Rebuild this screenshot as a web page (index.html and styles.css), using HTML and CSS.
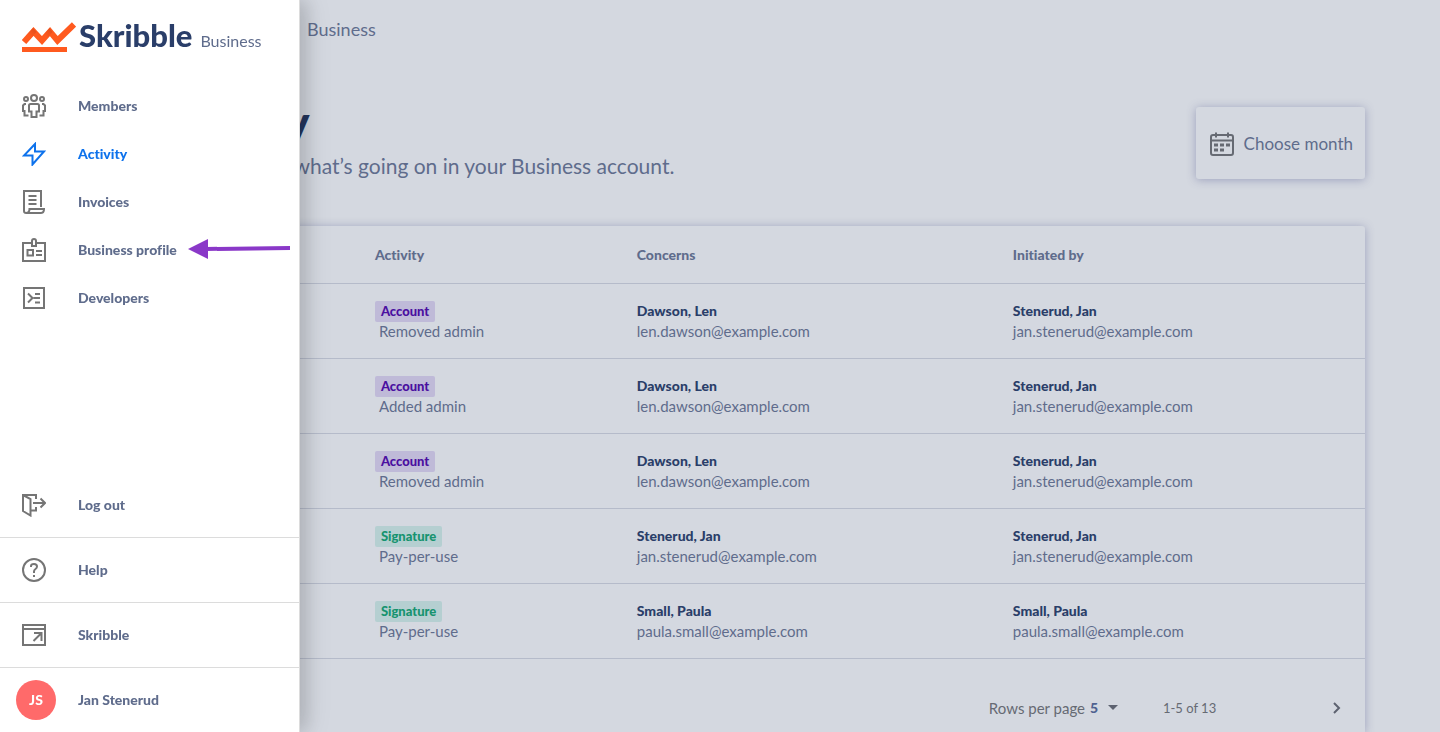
FILE: index.html
```html
<!DOCTYPE html>
<html lang="en">
<head>
<meta charset="utf-8">
<title>Skribble Business – Activity</title>
<meta name="viewport" content="width=device-width, initial-scale=1">
<link rel="stylesheet" href="styles.css">
</head>
<body>
<div class="page">
  <header class="topbar">Business</header>
  <main class="content">
    <div class="intro">
      <div class="intro-text">
        <h1 class="title">Activity</h1>
        <p class="subtitle">See what’s going on in your Business account.</p>
      </div>
      <button class="month" type="button">
        <svg class="icon" viewBox="0 0 24 24" aria-hidden="true"><rect x="1" y="3" width="22" height="20" rx="2"/><path d="M1 8.500h22M6 .5v5M18 .5v5"/><path class="dots" d="M4 13h4M10 13h4M16 13h4M4 18h4M10 18h4"/></svg>
        <span>Choose month</span>
      </button>
    </div>
    <section class="card">
      <table class="log">
        <colgroup><col class="c-first"><col class="c-activity"><col class="c-concerns"><col class="c-by"></colgroup>
        <thead>
          <tr><th></th><th scope="col">Activity</th><th scope="col">Concerns</th><th scope="col">Initiated by</th></tr>
        </thead>
        <tbody>
          <tr><td></td><td><span class="tag account">Account</span><span class="detail">Removed admin</span></td><td><b>Dawson, Len</b>len.dawson@example.com</td><td><b>Stenerud, Jan</b>jan.stenerud@example.com</td></tr>
          <tr><td></td><td><span class="tag account">Account</span><span class="detail">Added admin</span></td><td><b>Dawson, Len</b>len.dawson@example.com</td><td><b>Stenerud, Jan</b>jan.stenerud@example.com</td></tr>
          <tr><td></td><td><span class="tag account">Account</span><span class="detail">Removed admin</span></td><td><b>Dawson, Len</b>len.dawson@example.com</td><td><b>Stenerud, Jan</b>jan.stenerud@example.com</td></tr>
          <tr><td></td><td><span class="tag signature">Signature</span><span class="detail">Pay-per-use</span></td><td><b>Stenerud, Jan</b>jan.stenerud@example.com</td><td><b>Stenerud, Jan</b>jan.stenerud@example.com</td></tr>
          <tr><td></td><td><span class="tag signature">Signature</span><span class="detail">Pay-per-use</span></td><td><b>Small, Paula</b>paula.small@example.com</td><td><b>Small, Paula</b>paula.small@example.com</td></tr>
        </tbody>
      </table>
      <div class="pager">
        <label for="rows">Rows per page</label>
        <div class="rows-box">
          <select id="rows" class="rows"><option>5</option><option>10</option></select>
          <svg class="caret" viewBox="0 0 10 5" aria-hidden="true"><path d="M0 0h10L5 5z"/></svg>
        </div>
        <span class="range">1-5 of 13</span>
        <button class="next" type="button" aria-label="Next page"><svg viewBox="0 0 8 12" aria-hidden="true"><path d="M1 1l5 5-5 5"/></svg></button>
      </div>
    </section>
  </main>
</div>

<aside class="drawer">
  <a class="brand" href="#">
    <svg class="brand-mark" viewBox="0 0 54 30" aria-hidden="true">
      <defs><linearGradient id="shade" x1="0" y1="1" x2="1" y2="0"><stop offset="0.3" stop-color="#ff5a1f"/><stop offset="1" stop-color="#b93c18"/></linearGradient></defs>
      <path d="M2 20L11.500 9.500 20 18.500 28 9.500 35.500 18.500 52 2.500" fill="none" stroke="#ff5a1f" stroke-width="6"/>
      <path d="M4 13.500L11 6l3.500 4-6.500 7z" fill="url(#shade)" opacity=".5"/>
      <path d="M20.500 14.500L27.500 6l3 4-7 8z" fill="url(#shade)" opacity=".5"/>
      <path d="M0 25h45v5H0z" fill="#ff5a1f"/>
    </svg>
    <span class="brand-name">Skribble</span>
    <span class="brand-sub">Business</span>
  </a>
  <nav class="nav" aria-label="Main">
    <a class="item" href="#"><svg class="icon" viewBox="0 0 24 24" aria-hidden="true"><circle cx="12" cy="4" r="3"/><circle cx="4" cy="5" r="2"/><circle cx="20" cy="5" r="2"/><path d="M8.500 10h7q1.500 0 1.500 1.500v6h-2.500V23h-5v-5.500H7v-6Q7 10 8.500 10zM4 10H2.500L1 11.500V17h1.500v4.500h4M20 10h1.500l1.500 1.500V17h-1.500v4.500h-4"/></svg><span>Members</span></a>
    <a class="item active" href="#" aria-current="page"><svg class="icon" viewBox="0 0 24 24" aria-hidden="true"><path d="M13 2L2 13.500h8.500L10.500 22.500 22 9.500h-9z"/></svg><span>Activity</span></a>
    <a class="item" href="#"><svg class="icon" viewBox="0 0 24 24" aria-hidden="true"><path d="M19 17V1H2v20q0 2 2 2h15q3 0 3-4H7.500q0 4-3.500 4M6.500 6h8M6.500 10h8M6.500 14h8"/></svg><span>Invoices</span></a>
    <a class="item" href="#"><svg class="icon" viewBox="0 0 24 24" aria-hidden="true"><path d="M9 5H1v18h22V5h-8M10 8V3q0-2 2-2t2 2v5zM5.500 12h5.500v5.500H5.500zM14 13h6M14 17h6"/></svg><span>Business profile</span></a>
    <a class="item" href="#"><svg class="icon" viewBox="0 0 24 24" aria-hidden="true"><path d="M2 2h20v20H2zM6 7.500l4.500 4.500L6 16.500M13 8h5M11.500 12H18M13 16.500h5"/></svg><span>Developers</span></a>
  </nav>
  <div class="foot">
    <a class="item" href="#"><svg class="icon" viewBox="0 0 24 24" aria-hidden="true"><path d="M14 6V2H1v16l7.500 4.500V6L1 2M14 14v3.500H9.500M11 10h12M18.500 5.500L23 10l-4.500 4.500"/></svg><span>Log out</span></a>
    <a class="item" href="#"><svg class="icon" viewBox="0 0 24 24" aria-hidden="true"><circle cx="12" cy="12" r="11"/><path d="M9 9V8q0-2 3-2t3 2.500q0 1.500-1.500 2.500T12 13.500v1.500M12 17v2"/></svg><span>Help</span></a>
    <a class="item" href="#"><svg class="icon" viewBox="0 0 24 24" aria-hidden="true"><path d="M1 2h22v20H1zM1 6h22M11.500 18L19 10.500M12 10h7.500v8"/></svg><span>Skribble</span></a>
    <a class="item user" href="#"><span class="avatar">JS</span><span>Jan Stenerud</span></a>
  </div>
  <svg class="pointer" viewBox="0 0 102 20" aria-hidden="true"><path d="M0 10L20 0v20z"/><path d="M18 8l84-1v4l-84 1z"/></svg>
</aside>
</body>
</html>
```
FILE: styles.css
```css
* { box-sizing: border-box; }
body {
  margin: 0;
  background: #d4d8e0;
  color: #5f6c8c;
  font: 15px/20px Lato, "Liberation Sans", sans-serif;
  font-variant-ligatures: none;
}
a { color: inherit; text-decoration: none; }
button, select { font: inherit; color: inherit; background: none; border: 0; padding: 0; }
.icon { width: 24px; height: 24px; flex: none; fill: none; stroke: #757575; stroke-width: 2; }

.page { display: flex; flex-direction: column; min-height: 100vh; padding: 0 75px; }
.content { flex: 1; display: flex; flex-direction: column; }
.topbar { padding: 15px 0 0 232px; font-size: 18px; line-height: 28px; }
.intro { display: flex; justify-content: space-between; align-items: flex-start; padding-top: 55px; }
.intro-text { padding-left: 66px; }
.title { margin: 0 0 6px; font-size: 48px; line-height: 48px; font-weight: 900; color: #23355d; }
.subtitle { margin: 0; padding-left: 114px; font-size: 21px; line-height: 28px; }
.month {
  display: flex; align-items: center; gap: 10px;
  height: 72px; margin-top: 9px; padding: 1px 12px 0 14px;
  border-radius: 3px; font-size: 17px;
  box-shadow: 0 1px 10px rgba(80, 85, 140, .42);
  background: #d4d8e0;
}
.month .icon { stroke: #666a73; }
.month .dots { stroke-width: 3; }

.card { flex: 1; margin-top: 46px; border-radius: 3px 3px 0 0; background: #d4d8e0; box-shadow: 0 1px 10px rgba(80, 85, 140, .42); }
.log { width: 100%; table-layout: fixed; border-collapse: collapse; }
.c-first { width: 23.25%; }
.c-activity { width: 20.3%; }
.c-concerns { width: 29.15%; }
.log th { height: 57px; padding: 1px 0 0; text-align: left; font-size: 14px; font-weight: 900; border-bottom: 1px solid #b5bbca; }
.log td { height: 75px; padding: 17px 0; vertical-align: top; border-bottom: 1px solid #b5bbca; }
.log b { display: block; font-size: 14px; font-weight: 900; color: #2a3e69; }
.tag { display: block; width: fit-content; padding: 0 6px; border-radius: 2px; font-size: 13px; line-height: 21px; font-weight: 900; }
.account { color: #4a0fa0; background: #bfbad8; }
.signature { color: #16936f; background: #b5cfd1; }
.detail { display: block; padding-left: 4px; line-height: 19px; }

.pager { display: flex; align-items: center; justify-content: flex-end; padding: 39px 20px 0 0; color: #666a73; }
.rows-box { display: flex; align-items: center; margin-left: 5px; }
.rows { appearance: none; width: 28px; margin-right: -10px; font-size: 14px; font-weight: 900; color: #4f6290; }
.caret { width: 10px; height: 5px; fill: #5d6270; }
.range { width: 52px; margin-left: 45px; font-size: 13px; white-space: nowrap; }
.next { display: flex; justify-content: center; width: 16px; margin-left: 114px; }
.next svg { width: 8px; height: 12px; fill: none; stroke: #5d6270; stroke-width: 2; }

.drawer {
  position: fixed; inset: 0 auto 0 0; width: 300px;
  display: flex; flex-direction: column;
  background: #fff; border-right: 1px solid #dcdcdc;
  box-shadow: 8px 0 16px rgba(0, 0, 0, .1), 4px 0 28px rgba(0, 0, 0, .12);
  font-size: 14px; font-weight: 900;
}
.brand { display: flex; align-items: baseline; padding: 15px 22px 0; }
.brand-mark { width: 54px; height: 30px; align-self: flex-end; margin-bottom: 4px; }
.brand-name { margin-left: 3px; font-size: 31px; line-height: 41px; color: #2a3e69; }
.brand-sub { margin-left: 8px; font-size: 16px; font-weight: 400; }
.nav { padding-top: 26px; }
.item { display: flex; align-items: center; gap: 32px; height: 48px; padding-left: 22px; }
.active { color: #0d72ec; }
.active .icon { stroke: #0d72ec; }
.foot { margin-top: auto; }
.foot .item { height: 65px; border-bottom: 1px solid #dcdcdc; }
.foot .user { height: 64px; border: 0; padding-left: 16px; gap: 22px; }
.avatar { width: 40px; height: 40px; border-radius: 50%; background: #ff6a6a; color: #fff; line-height: 40px; text-align: center; }
.pointer { position: absolute; left: 188px; top: 239px; width: 102px; height: 20px; fill: #8a38c8; }
```
